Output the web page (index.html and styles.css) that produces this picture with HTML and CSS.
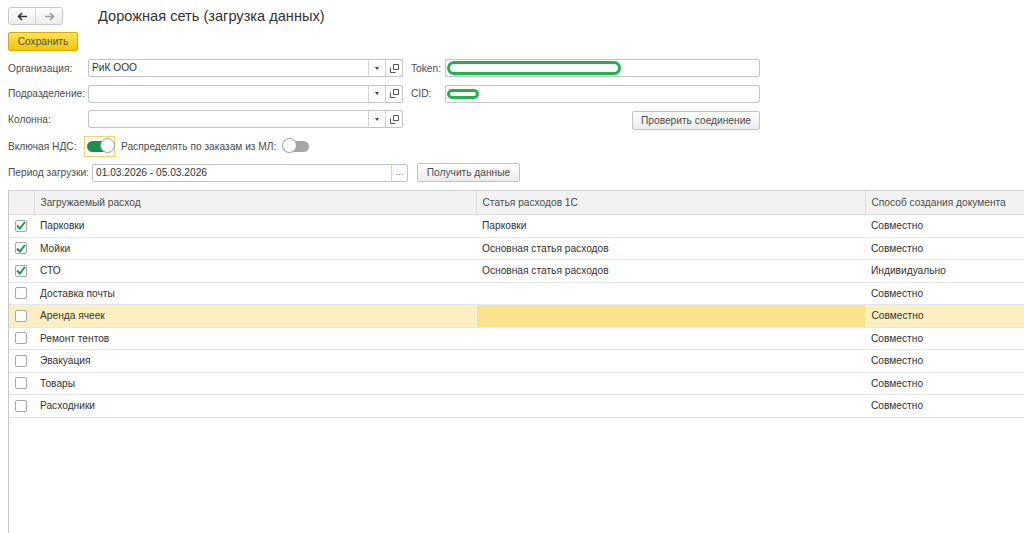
FILE: index.html
```html
<!DOCTYPE html>
<html>
<head>
    <title>Дорожная сеть (загрузка данных)</title>
    <link rel="stylesheet" href="styles.css">
</head>
<body>
    <div class="page">
        <div class="topbar">
            <div class="nav">
                <span class="nav-btn">
                    <svg width="11" height="9" viewBox="0 0 11 9"><path d="M10 4.5H2M5 1L1.5 4.5L5 8" fill="none" stroke="#333" stroke-width="1.6"/></svg>
                </span>
                <span class="nav-btn">
                    <svg width="11" height="9" viewBox="0 0 11 9"><path d="M1 4.5H9M6 1L9.5 4.5L6 8" fill="none" stroke="#999" stroke-width="1.6"/></svg>
                </span>
            </div>
            <h1 class="title">Дорожная сеть (загрузка данных)</h1>
        </div>

        <button class="btn-save">Сохранить</button>

        <div class="form">
            <label class="lbl">Организация:</label>
            <div class="field">
                <span class="field-text">РиК ООО</span>
                <span class="field-btn"><span class="caret"></span></span>
                <span class="field-btn"><svg width="9" height="9" viewBox="0 0 9 9"><path d="M3.5 0.5h5v5h-5z M0.5 3.5v5h5" fill="none" stroke="#555"/></svg></span>
            </div>
            <label class="lbl lbl-right">Token:</label>
            <div class="field">
                <span class="scribble scribble-token"></span>
            </div>

            <label class="lbl">Подразделение:</label>
            <div class="field">
                <span class="field-text"></span>
                <span class="field-btn"><span class="caret"></span></span>
                <span class="field-btn"><svg width="9" height="9" viewBox="0 0 9 9"><path d="M3.5 0.5h5v5h-5z M0.5 3.5v5h5" fill="none" stroke="#555"/></svg></span>
            </div>
            <label class="lbl lbl-right">CID:</label>
            <div class="field">
                <span class="scribble scribble-cid"></span>
            </div>

            <label class="lbl">Колонна:</label>
            <div class="field">
                <span class="field-text"></span>
                <span class="field-btn"><span class="caret"></span></span>
                <span class="field-btn"><svg width="9" height="9" viewBox="0 0 9 9"><path d="M3.5 0.5h5v5h-5z M0.5 3.5v5h5" fill="none" stroke="#555"/></svg></span>
            </div>
            <span></span>
            <div class="check-conn">
                <button class="btn btn-check">Проверить соединение</button>
            </div>
        </div>

        <div class="switches">
            <span class="lbl lbl-vat">Включая НДС:</span>
            <span class="switch-focus"><span class="switch on"><span class="knob"></span></span></span>
            <span class="lbl lbl-ml">Распределять по заказам из МЛ:</span>
            <span class="switch off"><span class="knob"></span></span>
        </div>

        <div class="period">
            <span class="lbl lbl-period">Период загрузки:</span>
            <div class="field field-period">
                <span class="field-text">01.03.2026 - 05.03.2026</span>
                <span class="field-btn dots">...</span>
            </div>
            <button class="btn btn-get">Получить данные</button>
        </div>
    </div>

    <div class="grid">
        <table>
            <colgroup>
                <col class="c-check">
                <col class="c-name">
                <col class="c-item">
                <col>
            </colgroup>
            <thead>
                <tr>
                    <th></th>
                    <th>Загружаемый расход</th>
                    <th>Статья расходов 1С</th>
                    <th>Способ создания документа</th>
                </tr>
            </thead>
            <tbody id="rows"></tbody>
        </table>
    </div>

    <script>
        var expenses = [
            {checked: true,  name: "Парковки",        item: "Парковки",                  mode: "Совместно"},
            {checked: true,  name: "Мойки",           item: "Основная статья расходов",  mode: "Совместно"},
            {checked: true,  name: "СТО",             item: "Основная статья расходов",  mode: "Индивидуально"},
            {checked: false, name: "Доставка почты",  item: "",                          mode: "Совместно"},
            {checked: false, name: "Аренда ячеек",    item: "",                          mode: "Совместно", current: true},
            {checked: false, name: "Ремонт тентов",   item: "",                          mode: "Совместно"},
            {checked: false, name: "Эвакуация",       item: "",                          mode: "Совместно"},
            {checked: false, name: "Товары",          item: "",                          mode: "Совместно"},
            {checked: false, name: "Расходники",      item: "",                          mode: "Совместно"}
        ];

        var tick = '<svg width="10" height="9" viewBox="0 0 10 9"><path d="M1 4.5L3.8 7.5L9 1" fill="none" stroke="#1a9a48" stroke-width="2"/></svg>';

        var body = document.getElementById('rows');
        for (var i = 0; i < expenses.length; i++) {
            var e = expenses[i];
            var tr = document.createElement('tr');
            if (e.current) tr.className = 'current';
            tr.innerHTML =
                '<td><span class="box">' + (e.checked ? tick : '') + '</span></td>' +
                '<td>' + e.name + '</td>' +
                '<td class="cell-item">' + e.item + '</td>' +
                '<td>' + e.mode + '</td>';
            body.appendChild(tr);
        }
    </script>
</body>
</html>
```

FILE: styles.css
```css
html, body {
    height: 100%;
}

body {
    margin: 0;
    font-family: "Liberation Sans", Arial, sans-serif;
    font-size: 10.2px;
    color: #333;
    background: #fff;
    overflow: hidden;
    display: flex;
    flex-direction: column;
}

.page {
    padding: 7px 0 0 8px;
}

.topbar {
    display: flex;
    align-items: center;
    height: 18px;
}

.nav {
    display: flex;
    width: 55px;
    height: 18px;
    box-sizing: border-box;
    border: 1px solid #c8c8c8;
    border-radius: 3px;
    background: linear-gradient(#fff, #ececec);
}

.nav-btn {
    flex: 1;
    display: flex;
    align-items: center;
    justify-content: center;
}

.nav-btn + .nav-btn {
    border-left: 1px solid #d6d6d6;
}

.title {
    margin: 0 0 0 35px;
    font-size: 14.6px;
    font-weight: normal;
    color: #333;
}

.btn-save {
    display: block;
    margin-top: 7px;
    width: 70px;
    height: 19px;
    padding: 0;
    font-family: inherit;
    font-size: 10.2px;
    color: #4d4d4d;
    border: 1px solid #d4ad00;
    border-radius: 2px;
    background: linear-gradient(#ffe25a, #f3c500);
}

.form {
    display: grid;
    grid-template-columns: 80px 315px 42px 315px;
    grid-auto-rows: 18px;
    row-gap: 7.5px;
    margin-top: 8px;
    align-items: center;
}

.lbl {
    color: #4d4d4d;
    white-space: nowrap;
}

.lbl-right {
    padding-left: 8px;
}

.field {
    position: relative;
    display: flex;
    height: 18px;
    box-sizing: border-box;
    border: 1px solid #c4c4c4;
    border-radius: 2px;
    background: #fff;
}

.field-text {
    flex: 1;
    padding-left: 3px;
    line-height: 16px;
    color: #333;
}

.field-btn {
    width: 16px;
    border-left: 1px solid #d4d4d4;
    display: flex;
    align-items: center;
    justify-content: center;
}

.caret {
    width: 0;
    height: 0;
    border-left: 2.5px solid transparent;
    border-right: 2.5px solid transparent;
    border-top: 3px solid #444;
}

.scribble {
    position: absolute;
    top: 1px;
    left: 1px;
    box-sizing: border-box;
    border: 3px solid #22b14c;
    border-radius: 8px;
    background: #fff;
}

.scribble-token {
    width: 174px;
    height: 14px;
}

.scribble-cid {
    top: 3px;
    width: 32px;
    height: 10px;
}

.check-conn {
    display: flex;
    justify-content: flex-end;
    height: 19px;
    transform: translateY(1px);
}

.btn {
    height: 19px;
    padding: 0;
    font-family: inherit;
    font-size: 10.2px;
    color: #4d4d4d;
    border: 1px solid #c2c2c2;
    border-radius: 2px;
    background: linear-gradient(#fff, #ebebeb);
}

.btn-check {
    width: 128px;
}

.switches {
    display: flex;
    align-items: center;
    height: 22px;
    margin-top: 7px;
}

.lbl-vat {
    width: 76px;
}

.switch-focus {
    display: flex;
    align-items: center;
    justify-content: center;
    width: 31px;
    height: 21px;
    box-sizing: border-box;
    border: 1px solid #f0d46a;
}

.switch {
    position: relative;
    width: 26px;
    height: 11px;
    border-radius: 6px;
}

.switch.on {
    background: #1c8f4c;
}

.switch.off {
    background: #a6a6a6;
    margin-left: 7px;
}

.knob {
    position: absolute;
    top: -3px;
    width: 15px;
    height: 15px;
    box-sizing: border-box;
    border: 1px solid #9a9a9a;
    border-radius: 50%;
    background: #fff;
}

.switch.on .knob {
    right: -2px;
}

.switch.off .knob {
    left: -1px;
}

.lbl-ml {
    margin-left: 6px;
}

.period {
    display: flex;
    align-items: center;
    margin-top: 6px;
}

.lbl-period {
    width: 84px;
}

.field-period {
    width: 316px;
}

.dots {
    color: #777;
    font-size: 9px;
    align-items: flex-end;
    padding-bottom: 4px;
    box-sizing: border-box;
}

.btn-get {
    margin-left: 9px;
    width: 103px;
}

.grid {
    flex: 1;
    margin: 8px 0 0 8px;
    border-top: 1px solid #d2d2d2;
    border-left: 1px solid #c8c8c8;
}

table {
    width: 1030px;
    border-collapse: collapse;
    table-layout: fixed;
}

.c-check {
    width: 25px;
}

.c-name {
    width: 442px;
}

.c-item {
    width: 389px;
}

th {
    height: 23px;
    padding: 0 6px;
    text-align: left;
    font-weight: normal;
    color: #4d4d4d;
    background: #f2f2f2;
    border-left: 1px solid #dcdcdc;
    border-bottom: 1px solid #dcdcdc;
}

th:first-child {
    border-left: none;
}

td {
    height: 21.5px;
    padding: 0 6px;
    color: #333;
    border-bottom: 1px solid #e6e6e6;
    white-space: nowrap;
}

td:first-child {
    padding: 0 0 0 6px;
}

.box {
    display: flex;
    align-items: center;
    justify-content: center;
    width: 12px;
    height: 12px;
    box-sizing: border-box;
    border: 1px solid #a8a8a8;
    border-radius: 2px;
    background: #fff;
}

tr.current td {
    background: #fcf0c2;
}

tr.current td.cell-item {
    background: #fbe28c;
    border-left: 1px solid #fff6d8;
    border-right: 1px solid #fff6d8;
}
```
